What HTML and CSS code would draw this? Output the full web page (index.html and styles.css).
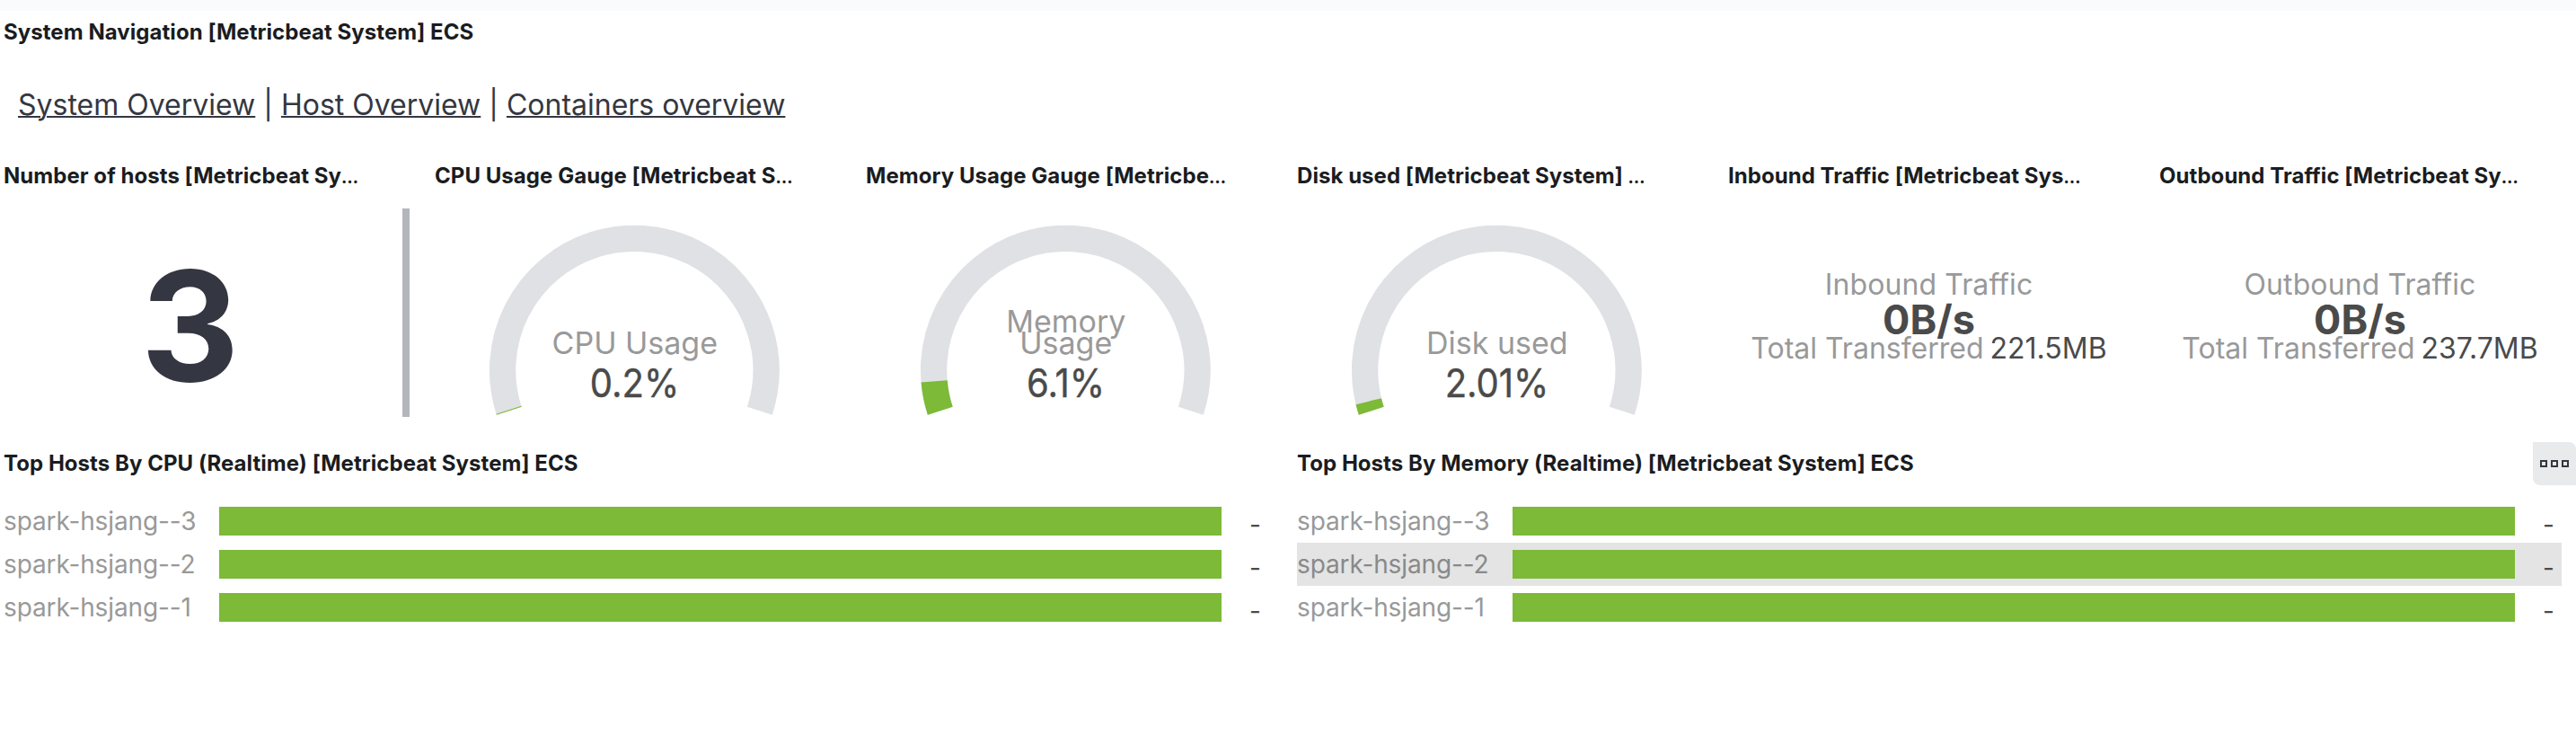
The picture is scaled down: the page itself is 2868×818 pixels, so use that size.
FILE: index.html
```html
<!DOCTYPE html>
<html lang="en">
<head>
<meta charset="utf-8">
<title>System Overview</title>
<link rel="stylesheet" href="styles.css">
</head>
<body>
<main class="dashboard">
  <section class="panel panel-nav">
    <h2 class="panel-title">System Navigation [Metricbeat System] ECS</h2>
    <nav class="links"><a href="#">System Overview</a> | <a href="#">Host Overview</a> | <a href="#">Containers overview</a></nav>
  </section>

  <div class="metrics">
    <section class="panel">
      <h2 class="panel-title">Number of hosts [Metricbeat Sy<span class="dots">…</span></h2>
      <div class="host-body"><div class="host-count">3</div><div class="scrollbar"></div></div>
    </section>
    <section class="panel">
      <h2 class="panel-title">CPU Usage Gauge [Metricbeat S<span class="dots">…</span></h2>
      <svg class="gauge" viewBox="4 0 476 272" width="476" height="272">
        <circle class="track" cx="226.3" cy="192" r="146.7" pathLength="360" transform="rotate(162 226.3 192)"/>
        <circle class="fill" cx="226.3" cy="192" r="146.7" pathLength="360" stroke-dasharray="0.43 360" transform="rotate(162 226.3 192)"/>
        <text class="gauge-label" x="226.8" y="173.5">CPU Usage</text>
        <text class="gauge-value" transform="translate(226.5 221.8) scale(.91 1)">0.2%</text>
      </svg>
    </section>
    <section class="panel">
      <h2 class="panel-title">Memory Usage Gauge [Metricbe<span class="dots">…</span></h2>
      <svg class="gauge" viewBox="4 0 476 272" width="476" height="272">
        <circle class="track" cx="226.3" cy="192" r="146.7" pathLength="360" transform="rotate(162 226.3 192)"/>
        <circle class="fill" cx="226.3" cy="192" r="146.7" pathLength="360" stroke-dasharray="13.18 360" transform="rotate(162 226.3 192)"/>
        <text class="gauge-label" x="226.8" y="149.5">Memory</text>
        <text class="gauge-label" x="226.8" y="173.5">Usage</text>
        <text class="gauge-value" transform="translate(226.5 221.8) scale(.91 1)">6.1%</text>
      </svg>
    </section>
    <section class="panel">
      <h2 class="panel-title">Disk used [Metricbeat System] <span class="dots">…</span></h2>
      <svg class="gauge" viewBox="4 0 476 272" width="476" height="272">
        <circle class="track" cx="226.3" cy="192" r="146.7" pathLength="360" transform="rotate(162 226.3 192)"/>
        <circle class="fill" cx="226.3" cy="192" r="146.7" pathLength="360" stroke-dasharray="4.34 360" transform="rotate(162 226.3 192)"/>
        <text class="gauge-label" x="226.8" y="173.5">Disk used</text>
        <text class="gauge-value" transform="translate(226.5 221.8) scale(.91 1)">2.01%</text>
      </svg>
    </section>
    <section class="panel">
      <h2 class="panel-title">Inbound Traffic [Metricbeat Sys<span class="dots">…</span></h2>
      <div class="traffic">
        <div class="traffic-label">Inbound Traffic</div>
        <div class="traffic-value">0B/s</div>
        <div class="traffic-total"><span>Total Transferred</span><b>221.5MB</b></div>
      </div>
    </section>
    <section class="panel">
      <h2 class="panel-title">Outbound Traffic [Metricbeat Sy<span class="dots">…</span></h2>
      <div class="traffic">
        <div class="traffic-label">Outbound Traffic</div>
        <div class="traffic-value">0B/s</div>
        <div class="traffic-total"><span>Total Transferred</span><b>237.7MB</b></div>
      </div>
    </section>
  </div>

  <div class="tops">
    <section class="panel">
      <h2 class="panel-title">Top Hosts By CPU (Realtime) [Metricbeat System] ECS</h2>
      <div class="rows">
        <div class="row"><span class="host">spark-hsjang--3</span><span class="bar"></span><span class="value">-</span></div>
        <div class="row"><span class="host">spark-hsjang--2</span><span class="bar"></span><span class="value">-</span></div>
        <div class="row"><span class="host">spark-hsjang--1</span><span class="bar"></span><span class="value">-</span></div>
      </div>
    </section>
    <section class="panel">
      <div class="panel-head">
        <h2 class="panel-title">Top Hosts By Memory (Realtime) [Metricbeat System] ECS</h2>
        <button class="options" aria-label="Panel options">
          <svg viewBox="0 0 32 8" width="32" height="8"><path d="M1 1h6v6H1zM13 1h6v6h-6zM25 1h6v6h-6z"/></svg>
        </button>
      </div>
      <div class="rows">
        <div class="row"><span class="host">spark-hsjang--3</span><span class="bar"></span><span class="value">-</span></div>
        <div class="row row-active"><span class="host">spark-hsjang--2</span><span class="bar"></span><span class="value">-</span></div>
        <div class="row"><span class="host">spark-hsjang--1</span><span class="bar"></span><span class="value">-</span></div>
      </div>
    </section>
  </div>
</main>
</body>
</html>
```
FILE: styles.css
```css
* { box-sizing: border-box; }
body {
  margin: 0;
  background: #fff;
  font-family: Inter, "Liberation Sans", sans-serif;
  color: #343741;
}
.dashboard {
  height: 818px;
  overflow: hidden;
  border-top: 12px solid #fafbfd;
  padding-left: 4px;
}
.panel-title {
  margin: 0;
  height: 48px;
  font-size: 24px;
  font-weight: 700;
  line-height: 47px;
  letter-spacing: 0.05px;
  color: #1a1c21;
  white-space: nowrap;
}
.dots {
  font-size: 19px;
  line-height: 1;
}
.panel-nav { height: 160px; }
.links {
  padding: 33px 16px 0;
  font-size: 32px;
  line-height: 48px;
}
.links a {
  color: inherit;
  text-decoration: underline;
  text-decoration-thickness: 2px;
}
.metrics {
  display: grid;
  grid-template-columns: repeat(6, 480px);
  height: 320px;
}
.metrics .panel { min-width: 0; }
.host-body {
  display: flex;
  width: 452px;
  height: 232px;
  margin-top: 12px;
}
.host-count {
  flex: 1;
  padding-right: 29px;
  text-align: center;
  font-size: 170px;
  font-weight: 700;
  line-height: 260px;
}
.scrollbar {
  width: 8px;
  background: #b3b6bd;
}
.gauge { display: block; }
.track, .fill {
  fill: none;
  stroke-width: 29.3;
}
.track {
  stroke: #e0e1e5;
  stroke-dasharray: 216 144;
}
.fill { stroke: #7cba37; }
.gauge-label, .gauge-value { text-anchor: middle; }
.gauge-label {
  font-size: 34px;
  fill: #999;
}
.gauge-value {
  font-size: 44px;
  fill: #4a4a4a;
  stroke: #4a4a4a;
  stroke-width: 0.4;
}
.traffic {
  width: 447px;
  padding-top: 81px;
  text-align: center;
  white-space: nowrap;
  color: #999;
  font-size: 32px;
}
.traffic-label {
  line-height: 32px;
  letter-spacing: 0.1px;
}
.traffic-value {
  margin-top: 1px;
  font-size: 45px;
  font-weight: 700;
  line-height: 44px;
  color: #4a4a4a;
}
.traffic-total {
  display: flex;
  justify-content: center;
  gap: 7px;
  margin-top: -6px;
  line-height: 32px;
}
.traffic-total b {
  font-weight: 400;
  color: #4a4a4a;
}
.tops {
  display: grid;
  grid-template-columns: 1440px 1424px;
}
.panel-head {
  display: flex;
  justify-content: space-between;
  height: 48px;
}
.options {
  display: flex;
  align-items: center;
  justify-content: center;
  width: 48px;
  height: 48px;
  padding: 0;
  border: 0;
  border-radius: 0 8px 0 8px;
  background: #e9eaeb;
}
.options path {
  fill: none;
  stroke: #343741;
  stroke-width: 2;
}
.rows { padding-top: 16px; }
.row {
  display: flex;
  align-items: center;
  width: 1408px;
  height: 48px;
  font-size: 28px;
  line-height: 48px;
}
.row-active { background: #e4e4e4; }
.host {
  width: 240px;
  letter-spacing: -0.12px;
  color: #999;
}
.row-active .host { color: #898989; }
.bar {
  width: 1116px;
  height: 32px;
  background: #7cba37;
}
.value {
  flex: 1;
  padding: 7px 8px 0 0;
  text-align: right;
  color: #4a4a4a;
}
```
